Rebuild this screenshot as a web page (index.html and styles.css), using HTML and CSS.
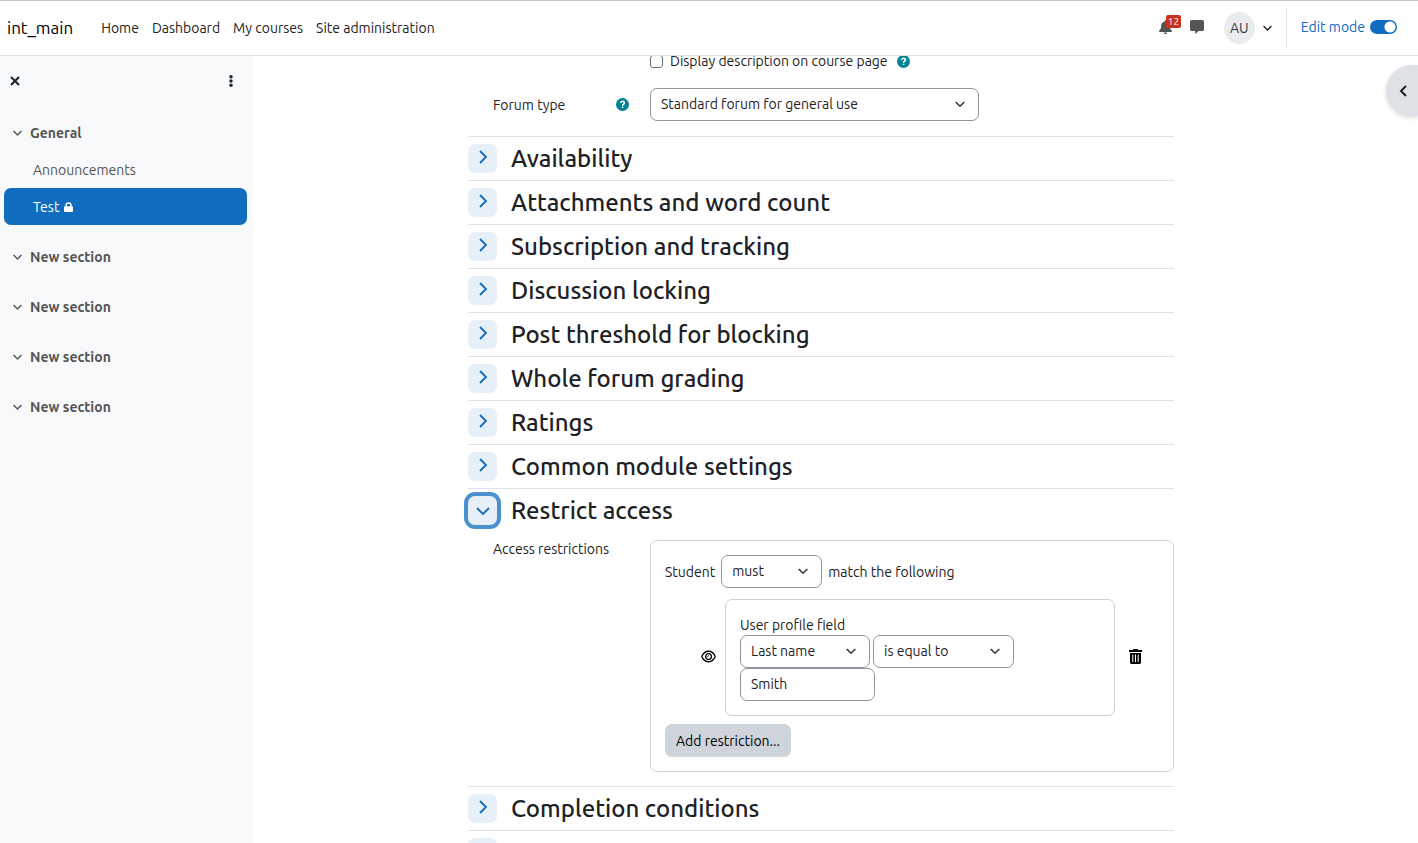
FILE: index.html
```html
<!DOCTYPE html>
<html lang="en">
<head>
  <meta charset="UTF-8">
  <meta name="viewport" content="width=device-width, initial-scale=1.0">
  <link rel="stylesheet" href="styles.css">
  <title>int_main: Editing forum</title>
</head>
<body>
  <svg class="sprite" aria-hidden="true">
    <symbol id="right" viewBox="0 0 10 14"><path d="M2 1l6 6-6 6" fill="none" stroke="currentColor" stroke-width="1.8"/></symbol>
    <symbol id="down" viewBox="0 0 14 10"><path d="M1 2l6 6 6-6" fill="none" stroke="currentColor" stroke-width="1.8"/></symbol>
    <symbol id="down-sm" viewBox="0 0 9 6"><path d="M.6 1l3.900 3.900L8.400 1" fill="none" stroke="currentColor" stroke-width="1.400"/></symbol>
    <symbol id="help" viewBox="0 0 14 14"><circle cx="7" cy="7" r="7" fill="currentColor"/><path d="M5 5.4C5.1 3 9 3 9 5.3 9 6.6 7.1 6.700 7.100 8.300M7.100 9.300v1.600" fill="none" stroke="#fff" stroke-width="1.700"/></symbol>
  </svg>
  <header class="navbar">
    <a href="#" class="brand">int_main</a>
    <nav class="nav-links">
      <a href="#">Home</a>
      <a href="#">Dashboard</a>
      <a href="#">My courses</a>
      <a href="#">Site administration</a>
    </nav>
    <div class="user-nav">
      <button class="icon-btn bell" aria-label="Notifications">
        <svg width="13" height="14" viewBox="0 0 13 14"><path d="M6.500 0c.5 0 .8.400.8.900v.500C9.500 1.800 10.800 3.500 10.800 5.600c0 3 .9 4.100 1.900 5 .6.600.2 1.400-.6 1.400H.9c-.8 0-1.200-.8-.6-1.400 1-.9 1.900-2 1.900-5 0-2.100 1.300-3.800 3.500-4.200V.9c0-.5.3-.9.8-.9zM4.800 12.500h3.400c0 2-3.400 2-3.400 0z" fill="currentColor"/></svg>
        <span class="count">12</span>
      </button>
      <button class="icon-btn" aria-label="Messages">
        <svg width="14" height="14" viewBox="0 0 14 14"><path d="M1.800 0h10.400C13.200 0 14 .8 14 1.800v7.400c0 1-.8 1.800-1.800 1.800H8.600l-3 2.700c-.2.200-.4.100-.4-.2V11H1.800C.8 11 0 10.200 0 9.200V1.800C0 .8.800 0 1.800 0z" fill="currentColor"/></svg>
      </button>
      <button class="user-menu" aria-label="User menu">
        <span class="avatar">AU</span>
        <svg width="9" height="6"><use href="#down-sm"/></svg>
      </button>
      <div class="edit-mode">
        <label for="editmode">Edit mode</label>
        <input type="checkbox" id="editmode" class="switch" checked>
      </div>
    </div>
  </header>
  <div class="page">
    <aside class="sidebar">
      <div class="sidebar-header">
        <button class="icon-btn" aria-label="Close"><svg width="10" height="10" viewBox="0 0 10 10"><path d="M1 1l8 8M9 1L1 9" fill="none" stroke="currentColor" stroke-width="2"/></svg></button>
        <button class="icon-btn" aria-label="Options"><svg width="4" height="12" viewBox="0 0 4 12"><g fill="currentColor"><circle cx="2" cy="1.700" r="1.700"/><circle cx="2" cy="6" r="1.700"/><circle cx="2" cy="10.300" r="1.700"/></g></svg></button>
      </div>
      <div class="section">
        <a href="#" class="section-title"><svg width="9" height="6"><use href="#down-sm"/></svg>General</a>
        <a href="#" class="item">Announcements</a>
        <a href="#" class="item active">Test <svg width="9" height="10" viewBox="0 0 9 10"><path d="M2 5V3.300C2 .2 7 .2 7 3.300V5" fill="none" stroke="currentColor" stroke-width="1.400"/><rect y="4.200" width="9" height="5.800" rx="1" fill="currentColor"/></svg></a>
      </div>
      <div class="section"><a href="#" class="section-title"><svg width="9" height="6"><use href="#down-sm"/></svg>New section</a></div>
      <div class="section"><a href="#" class="section-title"><svg width="9" height="6"><use href="#down-sm"/></svg>New section</a></div>
      <div class="section"><a href="#" class="section-title"><svg width="9" height="6"><use href="#down-sm"/></svg>New section</a></div>
      <div class="section"><a href="#" class="section-title"><svg width="9" height="6"><use href="#down-sm"/></svg>New section</a></div>
    </aside>
    <main class="content">
      <form class="mform">
        <div class="form-row description">
          <div class="form-label"></div>
          <div class="check">
            <input type="checkbox" id="showdescription">
            <label for="showdescription">Display description on course page</label>
            <svg class="help" width="13" height="13"><use href="#help"/></svg>
          </div>
        </div>
        <div class="form-row forum-type">
          <div class="form-label">
            <label for="type">Forum type</label>
            <svg class="help" width="13" height="13"><use href="#help"/></svg>
          </div>
          <select id="type" class="control type-select"><option>Standard forum for general use</option></select>
        </div>
        <section class="fieldset">
          <button type="button" class="toggle" aria-label="Availability"><svg width="10" height="14"><use href="#right"/></svg></button>
          <h3>Availability</h3>
        </section>
        <section class="fieldset">
          <button type="button" class="toggle" aria-label="Attachments"><svg width="10" height="14"><use href="#right"/></svg></button>
          <h3>Attachments and word count</h3>
        </section>
        <section class="fieldset">
          <button type="button" class="toggle" aria-label="Subscription"><svg width="10" height="14"><use href="#right"/></svg></button>
          <h3>Subscription and tracking</h3>
        </section>
        <section class="fieldset">
          <button type="button" class="toggle" aria-label="Discussion locking"><svg width="10" height="14"><use href="#right"/></svg></button>
          <h3>Discussion locking</h3>
        </section>
        <section class="fieldset">
          <button type="button" class="toggle" aria-label="Post threshold"><svg width="10" height="14"><use href="#right"/></svg></button>
          <h3>Post threshold for blocking</h3>
        </section>
        <section class="fieldset">
          <button type="button" class="toggle" aria-label="Whole forum grading"><svg width="10" height="14"><use href="#right"/></svg></button>
          <h3>Whole forum grading</h3>
        </section>
        <section class="fieldset">
          <button type="button" class="toggle" aria-label="Ratings"><svg width="10" height="14"><use href="#right"/></svg></button>
          <h3>Ratings</h3>
        </section>
        <section class="fieldset">
          <button type="button" class="toggle" aria-label="Common module settings"><svg width="10" height="14"><use href="#right"/></svg></button>
          <h3>Common module settings</h3>
        </section>
        <section class="fieldset">
          <button type="button" class="toggle focused" aria-label="Restrict access" aria-expanded="true"><svg width="14" height="10"><use href="#down"/></svg></button>
          <h3>Restrict access</h3>
        </section>
        <div class="form-row restrictions">
          <div class="form-label">Access restrictions</div>
          <div class="box availability">
            <div class="match">
              <label for="must">Student</label>
              <select id="must" class="control must-select"><option>must</option></select>
              <span>match the following</span>
            </div>
            <div class="condition">
              <button type="button" class="icon-btn dark" aria-label="Hide"><svg width="15" height="13" viewBox="0 0 15 13"><g fill="none" stroke="currentColor" stroke-width="1.300"><path d="M.8 6.500C3.500-.5 11.500-.5 14.200 6.500 11.500 13.500 3.500 13.500.8 6.500z"/><circle cx="7.500" cy="6.500" r="2.900"/><path d="M6.200 6.600c.9 0 1.300-.4 1.300-1.300" stroke-width=".9"/></g></svg></button>
              <div class="box profile">
                <label for="field">User profile field</label>
                <div class="profile-row">
                  <select id="field" class="control field-select"><option>Last name</option></select>
                  <select class="control op-select" aria-label="Comparison"><option>is equal to</option></select>
                </div>
                <input type="text" class="control value-input" value="Smith" aria-label="Value">
              </div>
              <button type="button" class="icon-btn dark" aria-label="Delete"><svg width="13" height="15" viewBox="0 0 13 15"><path d="M4.200 0h4.600v1H13v2H0V1h4.200z" fill="currentColor"/><path d="M1 4h11v9.500c0 .8-.7 1.500-1.500 1.500h-8C1.700 15 1 14.300 1 13.500z" fill="currentColor"/><path d="M3.800 5.500v7.500M6.500 5.500v7.500M9.200 5.500v7.500" stroke="#fff"/></svg></button>
            </div>
            <button type="button" class="btn">Add restriction...</button>
          </div>
        </div>
        <section class="fieldset">
          <button type="button" class="toggle" aria-label="Completion conditions"><svg width="10" height="14"><use href="#right"/></svg></button>
          <h3>Completion conditions</h3>
        </section>
        <section class="fieldset">
          <button type="button" class="toggle" aria-label="Tags"><svg width="10" height="14"><use href="#right"/></svg></button>
        </section>
      </form>
      <button class="drawer-toggle" aria-label="Open block drawer"><svg width="8" height="12" viewBox="0 0 8 12"><path d="M7 1L2 6l5 5" fill="none" stroke="currentColor" stroke-width="2"/></svg></button>
    </main>
  </div>
</body>
</html>
```

FILE: styles.css
```css
*, ::after, ::before {
  box-sizing: border-box;
}
body {
  margin: 0;
  height: 100vh;
  display: flex;
  flex-direction: column;
  overflow: hidden;
  background: #fff;
  color: #1d2125;
  font-family: Ubuntu, "Noto Sans", "Open Sans", sans-serif;
  font-size: 14px;
  line-height: 20px;
}
a {
  color: inherit;
  text-decoration: none;
}
button, input, select {
  font: inherit;
  color: inherit;
  margin: 0;
}
svg {
  display: block;
  flex: none;
}
.sprite {
  position: absolute;
  width: 0;
  height: 0;
}
.navbar {
  flex: none;
  display: flex;
  align-items: center;
  height: 56px;
  padding: 0 21px 0 7px;
  border-top: 1px solid #c6c6c6;
  border-bottom: 1px solid #dee2e6;
}
.brand {
  font-size: 17px;
  color: #000;
}
.nav-links {
  display: flex;
  gap: 13px;
  margin-left: 28px;
}
.user-nav {
  display: flex;
  align-items: center;
  margin-left: auto;
}
.icon-btn {
  position: relative;
  border: 0;
  padding: 0;
  background: none;
  color: #555;
}
.user-nav .icon-btn {
  padding-bottom: 2px;
}
.bell {
  margin-right: 18px;
}
.count {
  position: absolute;
  top: -5px;
  left: 7px;
  padding: 0 2px;
  border-radius: 2px;
  background: #ca3120;
  color: #fff;
  font-size: 10px;
  line-height: 13px;
}
.user-menu {
  display: flex;
  align-items: center;
  gap: 8px;
  margin: 0 14px 0 20px;
  padding: 0;
  border: 0;
  background: none;
}
.avatar {
  width: 31px;
  height: 32px;
  border-radius: 50%;
  background: #e9ecef;
  line-height: 32px;
  text-align: center;
  color: #343a40;
}
.edit-mode {
  display: flex;
  align-items: center;
  gap: 5px;
  height: 40px;
  padding: 0 0 2px 14px;
  border-left: 1px solid #dee2e6;
  color: #0f6cbf;
}
.switch {
  appearance: none;
  width: 27px;
  height: 14px;
  border-radius: 7px;
  background: radial-gradient(circle at 20px 7px, #fff 5px, #0f6cbf 6px);
}
.page {
  flex: 1;
  display: flex;
  min-height: 0;
}
.sidebar {
  flex: none;
  width: 253px;
  background: #f8f9fa;
  color: #555;
  padding: 0 6px 0 4px;
}
.sidebar-header {
  display: flex;
  align-items: center;
  justify-content: space-between;
  height: 50px;
  margin-bottom: 8px;
  padding: 0 14px 0 6px;
}
.sidebar-header .icon-btn {
  color: #1d2125;
}
.section {
  margin-bottom: 13px;
}
.section-title, .item {
  display: flex;
  align-items: center;
  height: 37px;
  border-radius: 7px;
}
.section-title {
  gap: 8px;
  padding-left: 9px;
  font-weight: 700;
}
.item {
  gap: 5px;
  padding-left: 29px;
}
.item.active {
  background: #0f6cbf;
  color: #fff;
}
.content {
  position: relative;
  flex: 1;
  overflow: hidden;
  padding: 0 29px 0 0;
}
.mform {
  max-width: 706px;
  margin: 0 auto;
}
.form-row {
  display: flex;
}
.form-label {
  flex: none;
  display: flex;
  align-items: center;
  justify-content: space-between;
  width: 182px;
  padding: 0 21px 0 25px;
}
/* first row is partly scrolled under the navbar */
.description {
  margin-top: -7px;
}
.check {
  display: flex;
  align-items: center;
  height: 24px;
}
.check input {
  appearance: none;
  width: 13px;
  height: 13px;
  margin-right: 7px;
  border: 1px solid #6a737b;
  border-radius: 3px;
  background: #fff;
}
.help {
  color: #008196;
}
.check .help {
  margin-left: 9px;
}
.forum-type {
  margin: 15px 0;
}
.control {
  height: 33px;
  padding: 0 10px 1px;
  border: 1px solid #8f959e;
  border-radius: 7px;
  background-color: #fff;
}
select.control {
  appearance: none;
  background-image: url("data:image/svg+xml,%3Csvg xmlns='http://www.w3.org/2000/svg' viewBox='0 0 10 7'%3E%3Cpath d='M.7 1l4.300 4.300L9.300 1' fill='none' stroke='%23343a40' stroke-width='1.500'/%3E%3C/svg%3E");
  background-repeat: no-repeat;
  background-position: right 13px center;
  background-size: 10px 7px;
}
.type-select {
  width: 329px;
}
.fieldset {
  display: flex;
  align-items: center;
  gap: 14px;
  height: 44px;
  border-top: 1px solid #dee2e6;
}
.fieldset h3 {
  margin: 0;
  font-size: 24px;
  font-weight: 500;
  line-height: 29px;
}
.toggle {
  display: flex;
  justify-content: center;
  width: 29px;
  height: 29px;
  padding: 6px 0 0;
  border: 0;
  border-radius: 7px;
  background: #e7f0f9;
  color: #0f6cbf;
}
.toggle.focused {
  padding-top: 10px;
  box-shadow: 0 0 0 4px #4b91cf;
}
.restrictions {
  margin: 8px 0 14px;
}
.restrictions .form-label {
  height: 18px;
}
.box {
  border: 1px solid #ced0d3;
  border-radius: 7px;
  padding: 14px;
}
.availability {
  flex: 1;
}
.match {
  display: flex;
  align-items: center;
  gap: 6px;
}
.must-select {
  width: 101px;
}
.condition {
  display: flex;
  align-items: center;
  margin: 11px 17px 8px 36px;
}
.dark {
  padding-bottom: 3px;
  color: #000;
}
.profile {
  flex: 1;
  margin: 0 14px 0 9px;
}
.profile label {
  display: block;
  padding-top: 1px;
}
.profile-row {
  display: flex;
  gap: 3px;
}
.field-select {
  width: 130px;
}
.op-select {
  width: 141px;
}
.value-input {
  display: block;
  width: 135px;
}
.btn {
  display: block;
  height: 33px;
  padding: 0 11px;
  border: 0;
  border-radius: 7px;
  background: #ced4da;
  color: #000;
}
.drawer-toggle {
  position: absolute;
  top: 9px;
  right: 0;
  width: 32px;
  height: 51px;
  padding: 0 0 0 13px;
  border: 0;
  border-radius: 26px 0 0 26px;
  background: #dee2e6;
  box-shadow: 0 2px 4px rgba(0, 0, 0, 0.15);
}
```
